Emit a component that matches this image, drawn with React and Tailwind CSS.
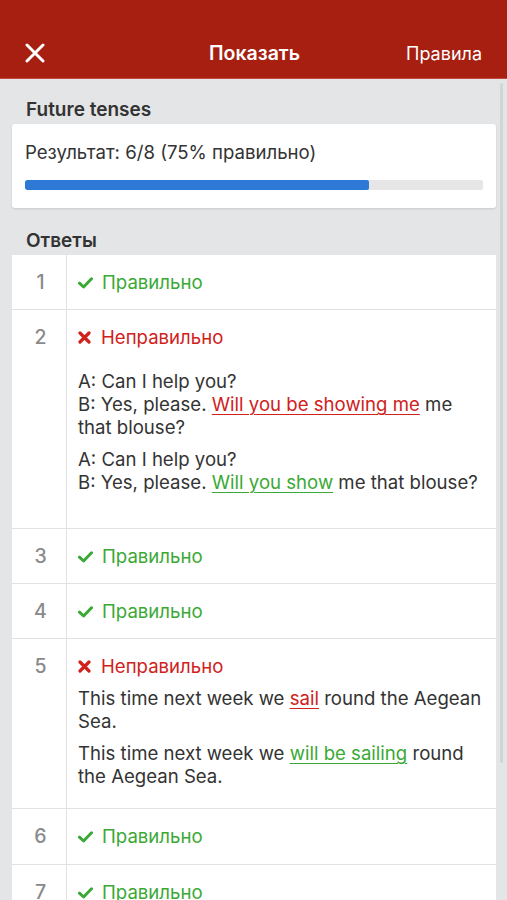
import React from "react";

const Check = () => (
  <svg width="15" height="12" viewBox="0 0 15 12" className="shrink-0">
    <path d="M1.5 6.2 L5.6 10 L13.5 1.8" fill="none" stroke="#3aa935" strokeWidth="3" strokeLinecap="round" strokeLinejoin="round" />
  </svg>
);

const Cross = () => (
  <svg width="13" height="13" viewBox="0 0 13 13" className="shrink-0">
    <path d="M2 2 L11 11 M11 2 L2 11" fill="none" stroke="#d0211b" strokeWidth="3.2" strokeLinecap="round" />
  </svg>
);

const Ok = () => (
  <div className="flex items-center gap-[9px] h-[23px] text-[#3aa935]">
    <Check />
    <span>Правильно</span>
  </div>
);

const Bad = () => (
  <div className="flex items-center gap-[10px] h-[23px] text-[#d0211b]">
    <Cross />
    <span>Неправильно</span>
  </div>
);

const Row = ({ n, children, last }) => (
  <div className={"flex " + (last ? "" : "border-b border-[#e2e2e2]")}>
    <div className="w-[55px] shrink-0 border-r border-[#e2e2e2] pt-[16px] pl-[3px] text-center text-[19.5px] leading-[23px] font-medium text-[#8a8a8a]">
      {n}
    </div>
    <div className="flex-1 pl-[11px] pr-[10px]">{children}</div>
  </div>
);

const Wrong = ({ children }) => (
  <span className="text-[#d0211b] underline decoration-[1px] underline-offset-[3px]">{children}</span>
);
const Right = ({ children }) => (
  <span className="text-[#3aa935] underline decoration-[1px] underline-offset-[3px]">{children}</span>
);

export default function App() {
  return (
    <div className="relative min-h-[900px] bg-[#e4e5e7] text-[18.6px] text-[#333] leading-[23px]" style={{ fontFamily: 'Inter, "Liberation Sans", Arial, sans-serif' }}>
      <div className="h-[79px] bg-[#a61f11] border-b border-[#c24a3d] pt-[28px] px-[25px] flex items-center text-white">
        <svg width="20" height="20" viewBox="0 0 20 20" className="shrink-0">
          <path d="M2 2 L18 18 M18 2 L2 18" stroke="white" strokeWidth="3" strokeLinecap="round" />
        </svg>
        <div className="flex-1 text-center text-[19.5px] font-semibold pl-[58px]">Показать</div>
        <div className="text-[18px]">Правила</div>
      </div>

      <div className="pl-[12px] pr-[11px]">
        <div className="pl-[14px] pt-[19px] pb-[3px] text-[19px] font-semibold">Future tenses</div>
        <div className="bg-white rounded-[3px] shadow-[0_1px_2px_rgba(0,0,0,0.12)] px-[13px] pt-[17px] pb-[18px]">
          <div>Результат: 6/8 (75% правильно)</div>
          <div className="mt-[16px] h-[10px] bg-[#e6e6e6] rounded-[2px] overflow-hidden">
            <div className="h-full w-[75%] bg-[#2f79d6] rounded-[2px]" />
          </div>
        </div>

        <div className="pl-[14px] pt-[21px] pb-[3px] text-[19px] font-semibold">Ответы</div>
        <div className="bg-white">
          <Row n="1">
            <div className="pt-[16px] pb-[15px]"><Ok /></div>
          </Row>
          <Row n="2">
            <div className="pt-[16px] pb-[34px]">
              <Bad />
              <p className="mt-[21px]">
                A: Can I help you?<br />
                B: Yes, please. <Wrong>Will you be showing me</Wrong> me that blouse?
              </p>
              <p className="mt-[9px]">
                A: Can I help you?<br />
                B: Yes, please. <Right>Will you show</Right> me that blouse?
              </p>
            </div>
          </Row>
          <Row n="3">
            <div className="pt-[16px] pb-[15px]"><Ok /></div>
          </Row>
          <Row n="4">
            <div className="pt-[16px] pb-[15px]"><Ok /></div>
          </Row>
          <Row n="5">
            <div className="pt-[16px] pb-[20px]">
              <Bad />
              <p className="mt-[9px]">
                This time next week we <Wrong>sail</Wrong> round the Aegean Sea.
              </p>
              <p className="mt-[9px]">
                This time next week we <Right>will be sailing</Right> round the Aegean Sea.
              </p>
            </div>
          </Row>
          <Row n="6">
            <div className="pt-[16px] pb-[16px]"><Ok /></div>
          </Row>
          <Row n="7">
            <div className="pt-[16px] pb-[15px]"><Ok /></div>
          </Row>
          <Row n="8" last>
            <div className="pt-[16px] pb-[15px]"><Ok /></div>
          </Row>
        </div>
      </div>

      <div className="absolute left-[500px] top-[83px] w-[3px] h-[680px] rounded-full bg-[#d3d4d6]" />
    </div>
  );
}
